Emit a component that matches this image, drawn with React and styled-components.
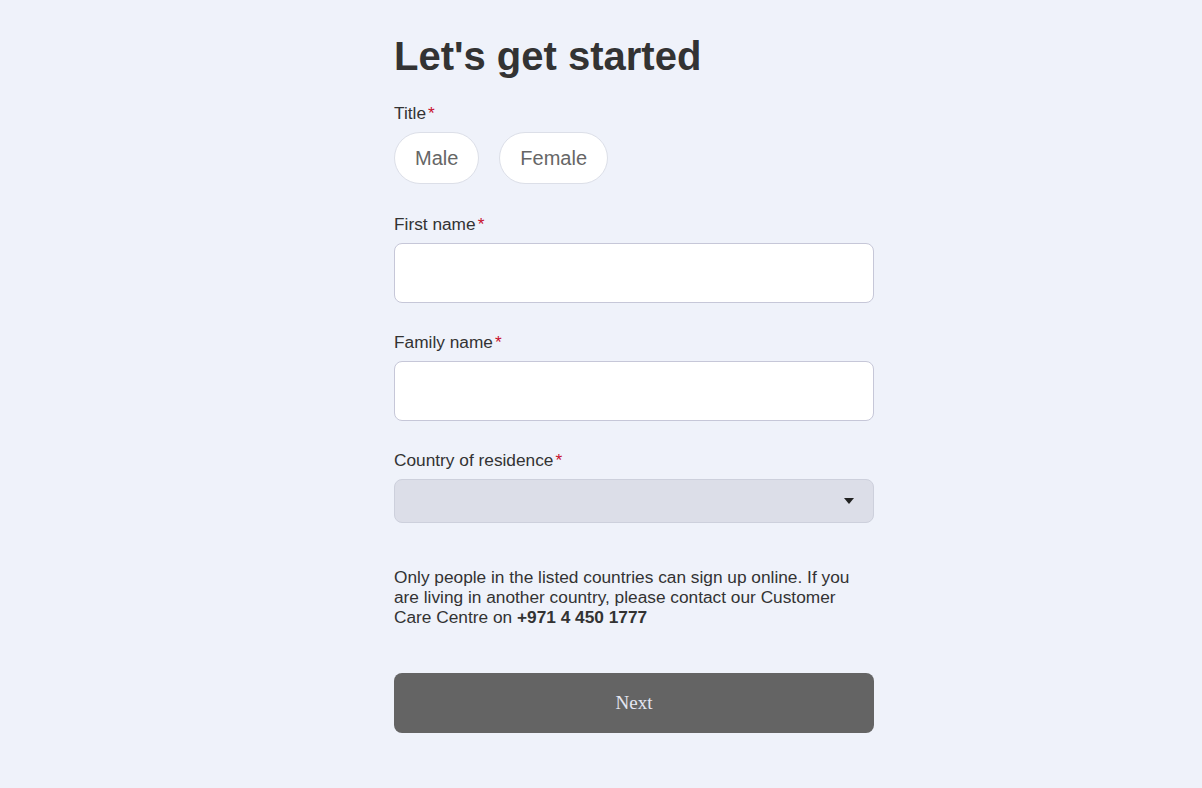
import React from 'react';
import styled, {createGlobalStyle} from 'styled-components';

const GlobalStyle = createGlobalStyle`
  body {
    margin: 0;
    background-color: #eff2fa;
    font-family: "Liberation Sans", Arial, sans-serif;
    color: #333;
  }
`;

const Page = styled.div`
  display: flex;
  min-height: 788px;
  padding-left: 394px;
`;

const Form = styled.form`
  width: 480px;
  display: flex;
  flex-direction: column;
  padding-top: 30px;
`;

const Heading = styled.h1`
  margin: 0 0 22px;
  font-size: 40px;
  line-height: 52px;
  font-weight: bold;
  color: #333;
`;

const Field = styled.div`
  display: flex;
  flex-direction: column;
  margin-bottom: ${({spacing}) => spacing}px;
`;

const Label = styled.label`
  font-size: 17.3px;
  line-height: 18px;
  margin-bottom: 10px;
  color: #333;
  &::after {
    content: '*';
    color: #c8102e;
    margin-left: 2px;
  }
`;

const Pills = styled.div`
  display: flex;
  gap: 20px;
`;

const Pill = styled.button`
  height: 52px;
  padding: 0 20px;
  border: 1px solid #dcdfe8;
  border-radius: 26px;
  background: #fff;
  font-family: "Liberation Sans", Arial, sans-serif;
  font-size: 20px;
  color: #666;
  cursor: pointer;
`;

const Input = styled.input`
  box-sizing: border-box;
  height: 60px;
  width: 100%;
  border: 1px solid #c6c7d8;
  border-radius: 8px;
  background: #fff;
  padding: 0 16px;
  font-size: 17px;
`;

const SelectBox = styled.div`
  box-sizing: border-box;
  height: 44px;
  border: 1px solid #cdd0dc;
  border-radius: 8px;
  background: #dcdee8;
  display: flex;
  align-items: center;
  justify-content: flex-end;
  padding-right: 19px;
`;

const Caret = styled.svg`
  width: 10px;
  height: 6px;
`;

const Note = styled.p`
  margin: 0 0 46px;
  font-size: 17.3px;
  line-height: 20px;
  color: #333;
  strong {
    font-weight: bold;
  }
`;

const NextButton = styled.button`
  height: 60px;
  border: none;
  border-radius: 8px;
  background: #646464;
  color: #e4e6f2;
  font-family: "Liberation Serif", "Times New Roman", serif;
  font-size: 19px;
  cursor: pointer;
`;

const App = () => (
  <>
    <GlobalStyle />
    <Page>
      <Form onSubmit={e => e.preventDefault()}>
        <Heading>Let's get started</Heading>
        <Field spacing={31}>
          <Label>Title</Label>
          <Pills>
            <Pill type="button">Male</Pill>
            <Pill type="button">Female</Pill>
          </Pills>
        </Field>
        <Field spacing={30}>
          <Label>First name</Label>
          <Input type="text" />
        </Field>
        <Field spacing={30}>
          <Label>Family name</Label>
          <Input type="text" />
        </Field>
        <Field spacing={44}>
          <Label>Country of residence</Label>
          <SelectBox>
            <Caret viewBox="0 0 10 6">
              <path d="M0 0 H10 L5 6 Z" fill="#222" />
            </Caret>
          </SelectBox>
        </Field>
        <Note>
          Only people in the listed countries can sign up online. If you are living in another
          country, please contact our Customer Care Centre on <strong>+971 4 450 1777</strong>
        </Note>
        <NextButton type="submit">Next</NextButton>
      </Form>
    </Page>
  </>
);

export default App;
